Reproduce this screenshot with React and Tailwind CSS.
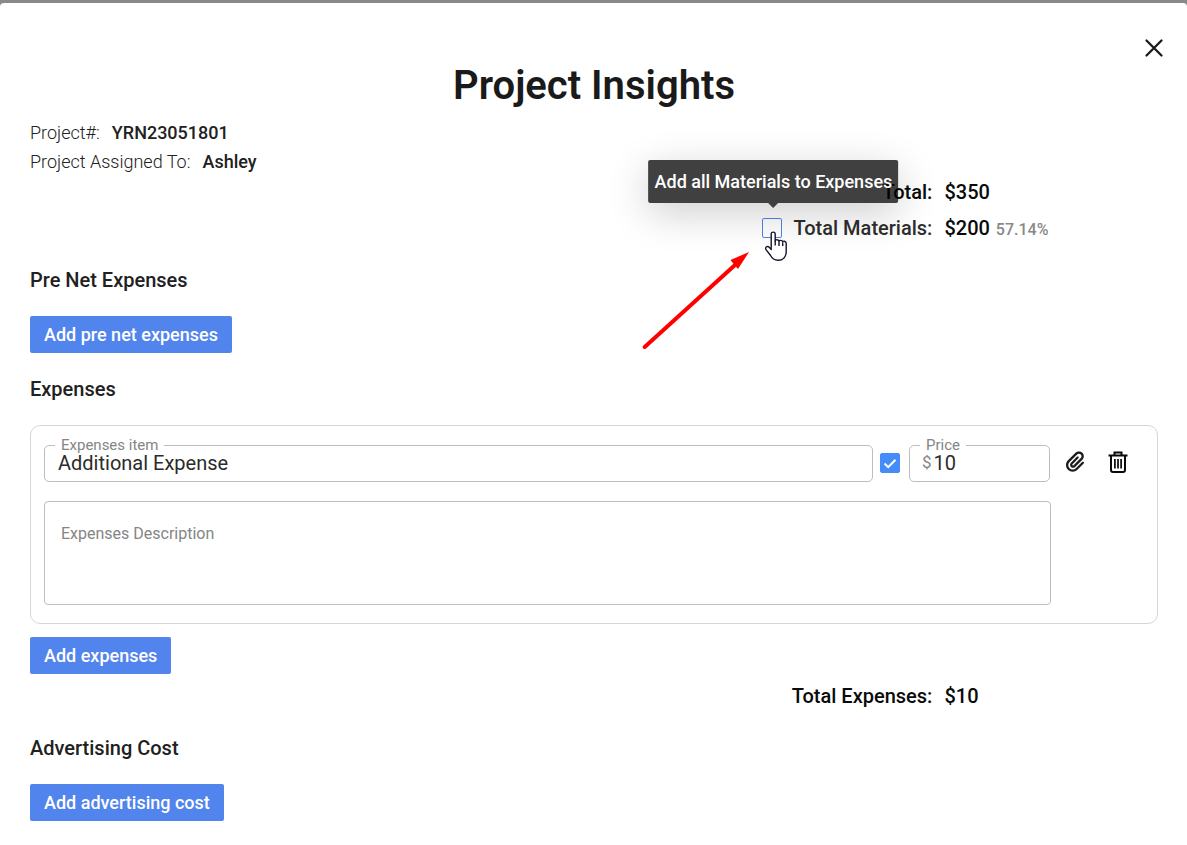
import { useState } from "react";
import { FaPaperclip } from "react-icons/fa6";

function Heading({ children, className }) {
  return <h2 className={`text-[20px] leading-7 font-medium text-[#212121] ${className}`}>{children}</h2>;
}

function AddButton({ children, className }) {
  return (
    <button type="button" className={`block h-[37px] rounded-[2px] bg-[#5284ed] px-3.5 text-[18px] leading-6 font-medium text-white ${className}`}>
      {children}
    </button>
  );
}

function TotalRow({ label, children }) {
  return (
    <div className="flex h-9 items-center gap-3 text-[20px] leading-7 font-medium text-[#0a0a0a]">
      <div className="flex w-4/5 items-center justify-end">{label}</div>
      <div className="flex items-baseline gap-1.5">{children}</div>
    </div>
  );
}

function OutlinedField({ id, label, prefix, value, labelClass, className }) {
  const [text, setText] = useState(value);
  return (
    <div className={`relative flex h-[37px] items-center rounded-[5px] border border-[#bdbdbd] pb-0.5 ${className}`}>
      <label htmlFor={id} className={`absolute -top-[11px] bg-white px-1.5 text-[15px] leading-5 text-[#858585] ${labelClass}`}>
        {label}
      </label>
      {prefix && <span className="pr-0.5 text-[17px] text-[#858585]">{prefix}</span>}
      <input id={id} value={text} onChange={(e) => setText(e.target.value)} className="min-w-0 flex-1 bg-transparent text-[20px] leading-6 text-[#2b2b2b] outline-none" />
    </div>
  );
}

function Tooltip() {
  return (
    <div role="tooltip" className="absolute bottom-[35px] left-[11px] z-10 w-max -translate-x-1/2 rounded-[2px] bg-black/75 px-1.5 py-2 text-[18px] leading-[27px] text-white shadow-[0_10px_40px_rgba(0,0,0,0.2)]">
      Add all Materials to Expenses
      <svg className="absolute top-full left-1/2 -translate-x-1/2" width="10" height="5" viewBox="0 0 10 5">
        <path d="M0 0h10L5 5z" fill="#404040" />
      </svg>
    </div>
  );
}

function HandPointer() {
  return (
    <svg className="pointer-events-none absolute top-[13px] left-[2px] z-20" width="24" height="31" viewBox="0 0 24 31">
      <path
        d="M7.2 18.5V3.2C7.2.4 11.2.4 11.2 3.2V10c0-1.8 3.8-1.7 3.8.4 0-1.5 3.7-1.4 3.7.6 0-1.3 3.5-1.2 3.5 1.2v8.3c0 5.4-3.2 8.8-8.2 8.8-3.9 0-6-1.9-7.6-5L2 18.6c-1.2-2.4 1.3-4.3 3.2-2.3z"
        fill="#fff" stroke="#15152b" strokeWidth="1.4" strokeLinejoin="round"
      />
      <path d="M11.2 9.5v5M15 10.5v4.5M18.7 11.5V15" stroke="#15152b" strokeWidth="1.4" fill="none" />
    </svg>
  );
}

function Arrow() {
  return (
    <svg className="pointer-events-none absolute top-[33px] -left-[120px]" width="108" height="98" viewBox="0 0 108 98">
      <path d="M2.7 96 93 14" stroke="#f00" strokeWidth="4" strokeLinecap="round" />
      <path d="M107 1 88.5 9l3.5 4.5L96 18z" fill="#f00" />
    </svg>
  );
}

function TrashIcon() {
  return (
    <svg width="20" height="24" viewBox="0 0 20 24" fill="none" stroke="#0a0a0a" strokeWidth="2">
      <path d="M.5 5.5h19M6.5 5V2.5h7V5M3 5.5V20q0 2 2 2h10q2 0 2-2V5.5" />
      <path d="M6.9 9v9.5M10 9v9.5M13.1 9v9.5" strokeWidth="1.7" />
    </svg>
  );
}

export default function App() {
  const [all, setAll] = useState(false);
  const [included, setIncluded] = useState(true);
  return (
    <div className="min-h-screen bg-[#8a8888] pt-[3px] font-['Roboto',sans-serif] text-[#212121]">
      <main className="relative min-h-[calc(100vh-3px)] rounded-t-[4px] bg-white pt-[59px] pr-[29px] pb-6 pl-[30px]">
        <button type="button" aria-label="Close" className="absolute top-[33px] right-[21px] p-0">
          <svg width="24" height="24" viewBox="0 0 24 24" stroke="#1c1c1c" strokeWidth="2.3" strokeLinecap="round">
            <path d="m4.5 4.5 15 15m0-15-15 15" />
          </svg>
        </button>
        <h1 className="text-center text-[40px] leading-[48px] font-semibold text-[#1a1a1a]">Project Insights</h1>

        <dl className="mt-[11px] flex flex-col gap-[5px] text-[18px] leading-6">
          <div className="flex gap-3">
            <dt className="font-light">Project#:</dt>
            <dd className="font-medium">YRN23051801</dd>
          </div>
          <div className="flex gap-3">
            <dt className="font-light">Project Assigned To:</dt>
            <dd className="font-medium">Ashley</dd>
          </div>
        </dl>

        <TotalRow label="Total:">$350</TotalRow>
        <TotalRow
          label={
            <>
              <span className="relative mr-[11px] flex">
                <input id="all-materials" type="checkbox" checked={all} onChange={() => setAll(!all)} className="size-5 appearance-none rounded-[2px] border border-[#5284ed] bg-white checked:bg-[#468bfa]" />
                <Tooltip />
                <HandPointer />
                <Arrow />
              </span>
              <label htmlFor="all-materials" className="text-[#2e2e2e]">Total Materials:</label>
            </>
          }
        >
          <span>$200</span>
          <span className="text-[16px] leading-6 text-[#888]">57.14%</span>
        </TotalRow>

        <Heading className="mt-5">Pre Net Expenses</Heading>
        <AddButton className="mt-[22px]">Add pre net expenses</AddButton>

        <Heading className="mt-[22px]">Expenses</Heading>
        <section className="mt-[22px] rounded-[10px] border border-[#d6d6d6] px-[13px] pt-[19px] pb-[18px]">
          <div className="flex items-center">
            <OutlinedField id="item" label="Expenses item" value="Additional Expense" labelClass="left-[10px]" className="flex-1 pr-3 pl-[13px]" />
            <div className="mr-[9px] ml-[7px] pb-0.5">
              <span className="relative flex">
                <input type="checkbox" aria-label="Include expense" checked={included} onChange={() => setIncluded(!included)} className="peer size-5 appearance-none rounded-[2px] border border-[#468bfa] checked:bg-[#468bfa]" />
                <svg className="pointer-events-none absolute inset-0 hidden peer-checked:block" width="20" height="20" viewBox="0 0 20 20" fill="none" stroke="#fff" strokeWidth="2">
                  <path d="m4.5 10.5 3.7 3.7 7.3-7.4" />
                </svg>
              </span>
            </div>
            <OutlinedField id="price" label="Price" prefix="$" value="10" labelClass="left-[10px]" className="w-[141px] pr-2 pl-3" />
            <div className="flex w-[94px] items-center gap-[23px] pb-1 pl-[15px]">
              <button type="button" aria-label="Attach file">
                <FaPaperclip className="h-[21px] w-5 text-[#1c1c1c]" />
              </button>
              <button type="button" aria-label="Delete expense"><TrashIcon /></button>
            </div>
          </div>
          <div className="mt-[19px] mr-[93px] flex">
            <textarea aria-label="Expenses Description" placeholder="Expenses Description" className="h-[104px] w-full resize-none rounded-[4px] border border-[#bdbdbd] px-4 py-5 text-[16px] leading-6 outline-none placeholder:text-[#858585]" />
          </div>
        </section>
        <AddButton className="mt-[13px]">Add expenses</AddButton>

        <div className="mt-1">
          <TotalRow label="Total Expenses:">$10</TotalRow>
        </div>

        <Heading className="mt-5">Advertising Cost</Heading>
        <AddButton className="mt-[22px]">Add advertising cost</AddButton>
      </main>
    </div>
  );
}
